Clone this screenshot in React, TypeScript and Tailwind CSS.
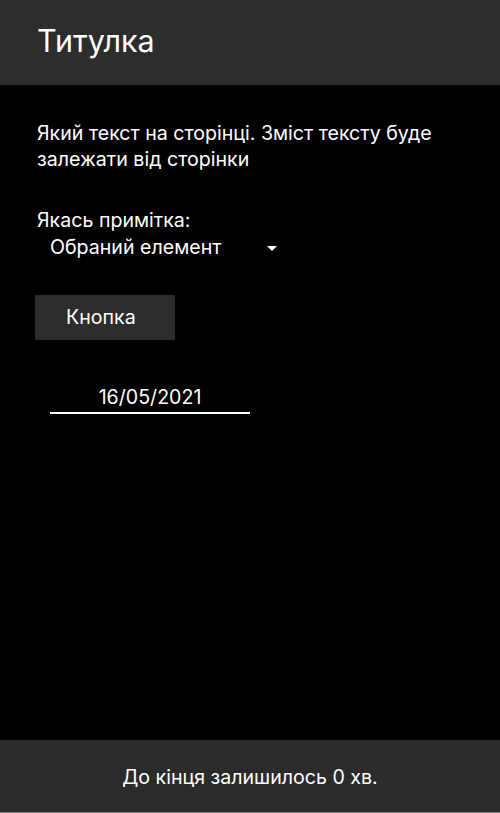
import React from "react";

export default function App() {
  return (
    <div
      className="flex h-[813px] w-[500px] flex-col bg-black text-white"
      style={{ fontFamily: "Inter, 'Noto Sans', sans-serif" }}
    >
      <header className="flex h-[85px] shrink-0 items-center bg-[#2d2d2d] pl-[37px]">
        <h1 className="-mt-[2px] text-[30.5px] font-normal leading-none">Титулка</h1>
      </header>
      <main className="flex flex-1 flex-col px-[37px] pt-[35px]">
        <p className="text-[19.6px] leading-[26px]">
          Який текст на сторінці. Зміст тексту буде залежати від сторінки
        </p>
        <div className="mt-[34px] text-[19.6px] leading-[28px]">Якась примітка:</div>
        <div className="ml-[13px] flex h-[28px] w-[227px] items-center justify-between text-[19.6px]">
          <span>Обраний елемент</span>
          <svg width="10" height="5" viewBox="0 0 10 5">
            <path d="M0 0 L10 0 L5 5 Z" fill="white" />
          </svg>
        </div>
        <button className="-ml-[2px] mt-[33px] flex h-[45px] w-[140px] items-center bg-[#2d2d2d] pl-[31px] text-[19.6px]">
          Кнопка
        </button>
        <div className="ml-[13px] mt-[44px] flex h-[30px] w-[200px] items-center justify-center border-b-2 border-white text-[19.6px]">
          16/05/2021
        </div>
      </main>
      <footer className="flex h-[73px] shrink-0 items-center justify-center border-b border-[#7a7a7a] bg-[#2b2b2b] pt-[3px] text-[19.6px]">
        До кінця залишилось 0 хв.
      </footer>
    </div>
  );
}
